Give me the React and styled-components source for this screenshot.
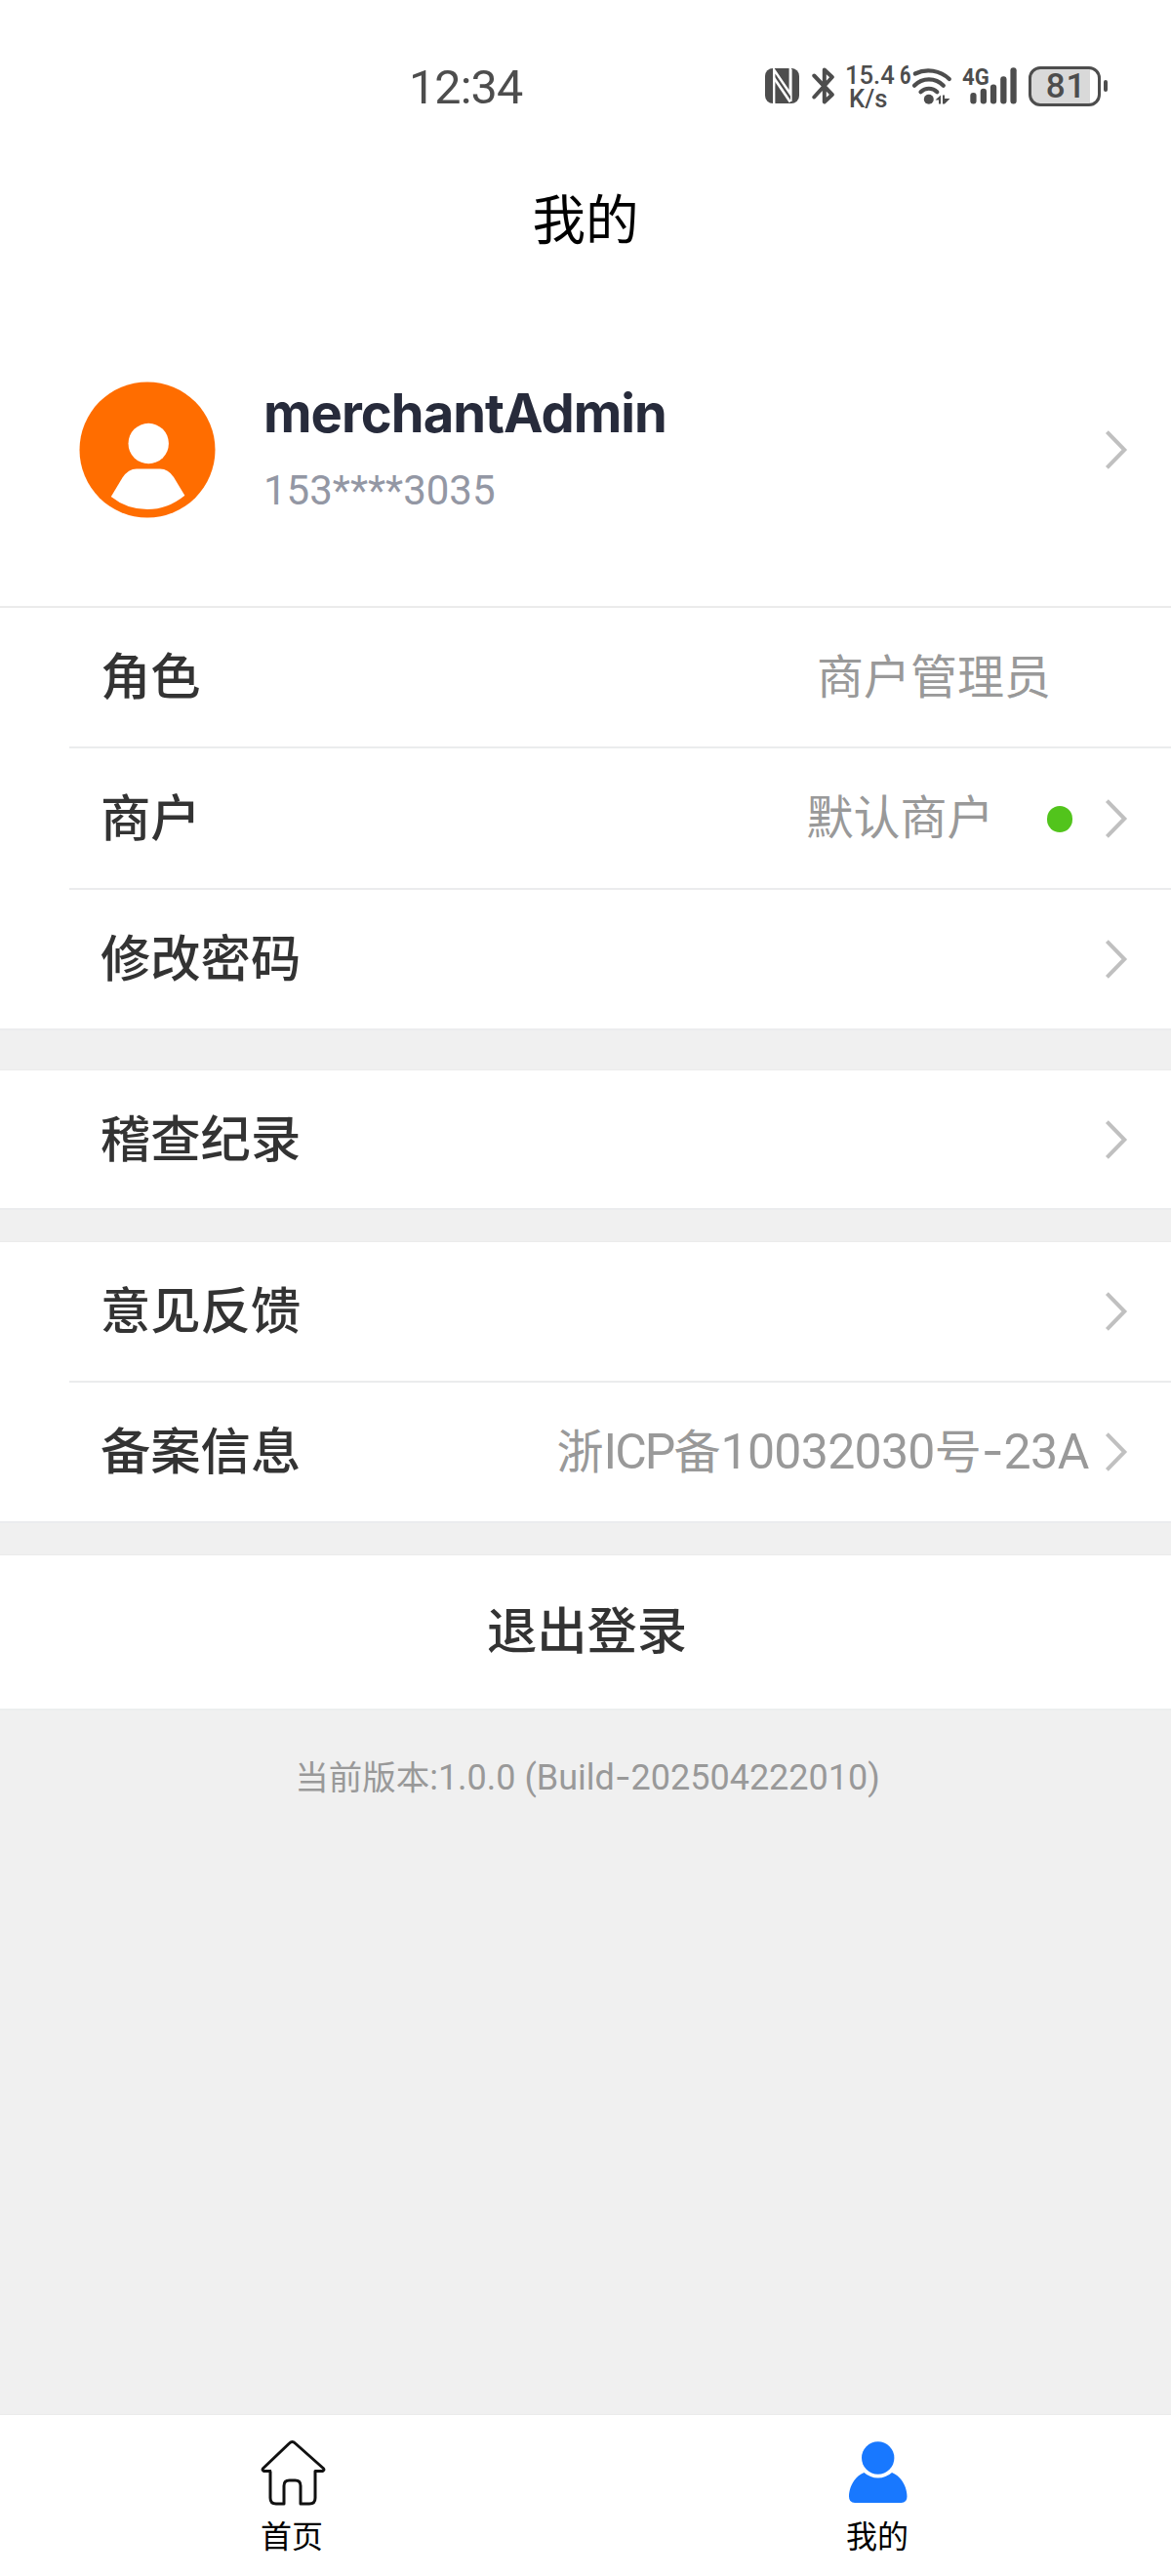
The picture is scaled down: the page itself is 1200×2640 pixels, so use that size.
import React from "react";
import styled, { createGlobalStyle } from "styled-components";

const GlobalStyle = createGlobalStyle`
  * { box-sizing: border-box; }
  body {
    margin: 0;
    background: #f0f0f0;
    font-family: Inter, "Noto Sans CJK SC", sans-serif;
  }
`;

const INK = "#4d4d4d";

const Screen = styled.div`
  width: 1200px;
  height: 2640px;
  display: flex;
  flex-direction: column;
  background: #f0f0f0;
  white-space: nowrap;
  overflow: hidden;
`;

const StatusBar = styled.div`
  height: 176px;
  flex: none;
  display: flex;
  align-items: center;
  background: #fff;
  color: ${INK};
  padding: 0 65px 0 419px;
  font-family: Roboto, sans-serif;
`;

const Clock = styled.div`
  flex: 1;
  font-size: 48.5px;
  line-height: 60px;
  font-weight: 400;
  letter-spacing: -0.9px;
  padding-top: 4px;
`;

const StatusIcons = styled.div`
  display: flex;
  align-items: center;

  svg { display: block; }
`;

const Gap = styled.span`
  width: ${(p) => p.$w}px;
`;

const Speed = styled.div`
  width: 51px;
  font-size: 25.6px;
  font-weight: 500;
  line-height: 23.5px;
  padding-top: 3px;
`;

const SpeedUnit = styled.div`
  padding-left: 4px;
`;

const WifiGeneration = styled.span`
  width: 12px;
  font-size: 25px;
  line-height: 26px;
  font-weight: 700;
  padding-bottom: 21px;
  transform: scaleX(0.8);
  transform-origin: left;
`;

const Cellular = styled.div`
  position: relative;
  width: 56px;
  height: 38px;
`;

const Network = styled.span`
  position: absolute;
  left: 0;
  top: -3px;
  font-size: 24.5px;
  line-height: 25px;
  font-weight: 700;
  transform: scaleX(0.9);
  transform-origin: left;
`;

const Battery = styled.div`
  width: 74px;
  height: 41px;
  border: 3px solid ${INK};
  border-radius: 12px;
  display: flex;
  align-items: center;
  justify-content: center;
  font-size: 35px;
  line-height: 35px;
  font-weight: 500;
  letter-spacing: 0.8px;
  padding: 1px 0 0 3px;
  background: linear-gradient(to right, #d9d9d9 60px, #fff 60px);
`;

const BatteryTip = styled.div`
  width: 4px;
  height: 12px;
  margin-left: 3px;
  border-radius: 2px;
  background: ${INK};
`;

const NavBar = styled.header`
  height: 94px;
  flex: none;
  display: flex;
  align-items: center;
  justify-content: center;
  background: #fff;
  color: #000;
  font-size: 54.6px;
  line-height: 60px;
  padding-top: 3px;
`;

const Profile = styled.section`
  height: 353px;
  flex: none;
  display: flex;
  align-items: center;
  background: #fff;
  border-bottom: 2px solid #ebebeb;
  padding: 30px 44px 0 81px;

  svg { display: block; }
`;

const Identity = styled.div`
  flex: 1;
  display: flex;
  flex-direction: column;
  padding: 4px 0 0 49px;
  line-height: 80px;
`;

const UserName = styled.div`
  font-size: 54.3px;
  font-weight: 700;
  letter-spacing: -0.95px;
  color: #272b3b;
`;

const Phone = styled.div`
  font-family: Roboto, sans-serif;
  font-size: 42px;
  color: #9397a4;
`;

const Group = styled.section`
  flex: none;
  background: #fff;
  margin-top: ${(p) => p.$gap || 0}px;
  border-top: ${(p) => (p.$gap ? "1px solid #ebebeb" : "none")};
  border-bottom: 2px solid #ebecee;
`;

const Row = styled.div`
  height: ${(p) => p.$h || 142}px;
  display: flex;
  align-items: center;
  padding: 0 44px 0 103px;
  line-height: 70px;
`;

const Divider = styled.div`
  height: 2px;
  margin-left: 71px;
  background: #ebeced;
`;

const Label = styled.div`
  flex: 1;
  font-size: 51.3px;
  font-weight: 500;
  color: #333;
  padding-bottom: 2px;
`;

const Value = styled.div`
  font-size: 48px;
  color: #999;
  padding-bottom: 1px;
  margin-right: ${(p) => p.$after}px;
`;

const Latin = styled.span`
  font-family: Roboto, sans-serif;
  font-size: ${(p) => p.$size}px;
  letter-spacing: ${(p) => p.$track || 0}px;
`;

const Dash = styled.span`
  font-family: Inter, sans-serif;
`;

const OnlineDot = styled.span`
  width: 26.5px;
  height: 26.5px;
  border-radius: 50%;
  background: #52c41c;
  margin: 2px 33px 0 0;
`;

const LogoutButton = styled.button`
  height: 158px;
  flex: none;
  margin-top: 32px;
  border: 0;
  border-top: 1px solid #ebebeb;
  background: #fff;
  color: #333;
  font-family: inherit;
  font-size: 51.3px;
  font-weight: 500;
  line-height: 70px;
  padding: 0 0 4px 3px;
`;

const Version = styled.footer`
  flex: 1;
  border-top: 2px solid #eceeee;
  padding: 38px 0 0 4px;
  text-align: center;
  color: #999;
  font-size: 34.5px;
  line-height: 60px;
`;

const TabBar = styled.nav`
  height: 166px;
  flex: none;
  display: flex;
  background: #fff;
  border-top: 1px solid #ebebeb;
`;

const Tab = styled.div`
  flex: 1;
  display: flex;
  flex-direction: column;
  align-items: center;
  padding-top: 22px;
  color: #000;
  font-size: 32px;
  line-height: 40px;

  svg { display: block; margin-bottom: 11px; }
`;

const TabLabel = styled.span`
  padding-right: 2px;
`;

const Chevron = () => (
  <svg width="24" height="42" viewBox="0 0 24 42" fill="none" stroke="#c0c0c0" strokeWidth="4">
    <path d="M2.4 2.7L20.3 21L2.4 39.3" />
  </svg>
);

const NfcIcon = () => (
  <svg width="35" height="36" viewBox="0 0 35 36">
    <rect width="35" height="36" rx="8" fill={INK} />
    <path d="M9.2 36V1.5L25.8 26V0" fill="none" stroke="#fff" strokeWidth="2.4" />
    <path d="M9.2 10L25.8 34.5" fill="none" stroke="#fff" strokeWidth="2.6" />
    <path d="M11.6 18V35" fill="none" stroke={INK} strokeWidth="1.4" />
    <path d="M26.8 1V34" fill="none" stroke="#fff" strokeWidth="1.6" />
  </svg>
);

const BluetoothIcon = () => (
  <svg width="24" height="38" viewBox="0 0 24 38" fill="none" stroke={INK} strokeWidth="4" strokeLinecap="round" strokeLinejoin="round">
    <path d="M2.3 8.5L20.8 28L12.8 35.5V2.5L20.8 10L2.3 30.5" />
  </svg>
);

const WifiIcon = () => (
  <svg width="42" height="40" viewBox="0 0 42 40">
    <g fill="none" stroke={INK} strokeWidth="4.2" strokeLinecap="round">
      <path d="M3.8 7.5A31 31 0 0 1 38.8 13" />
      <path d="M3 19.8A20.5 20.5 0 0 1 32.8 19.8" />
      <path d="M9.5 26.2A12 12 0 0 1 26.3 26.2" />
    </g>
    <circle cx="17.8" cy="33.8" r="5" fill={INK} />
    <path d="M24.5 34.5L30 29.5V38.5H28V34.5ZM32 29.5H34V33H39.5L34 38.5H32Z" fill={INK} />
  </svg>
);

const SignalBars = () => (
  <svg width="56" height="38" viewBox="0 0 56 38" fill={INK}>
    <rect x="8.3" y="26" width="6.3" height="11.5" rx="3" />
    <rect x="18.7" y="21.8" width="6.3" height="15.7" rx="3" />
    <rect x="28.9" y="17.5" width="6.3" height="20" rx="3" />
    <rect x="39.2" y="9.2" width="6.3" height="28.3" rx="3" />
    <rect x="49.4" y="0.3" width="6.3" height="37.2" rx="3" />
  </svg>
);

const Avatar = () => (
  <svg width="140" height="140" viewBox="0 0 140 140">
    <circle cx="70" cy="70" r="69.5" fill="#ff6d00" />
    <circle cx="71.2" cy="63.5" r="20.7" fill="#fff" />
    <path d="M32.8 118L44.5 98.5Q50.5 89.5 59 89.5H83Q91.5 89.5 97 98L108.3 116.8Q91 131 70 131Q49 131 32.8 118Z" fill="#fff" />
  </svg>
);

const HomeIcon = () => (
  <svg width="72" height="72" viewBox="0 0 72 72" fill="none" stroke="#111" strokeWidth="3" strokeLinejoin="round">
    <path d="M14 35.5H6.5Q4 34.5 5.8 32.5L32.5 7Q35.5 4 38.5 7L67.2 32.5Q69 34.5 66.5 35.5H59V63Q59 69 53 69H44V50.5Q44 45 38.5 45H32.5Q27 45 27 50.5V69H19Q13 69 13 63V35.5" />
  </svg>
);

const UserIcon = () => (
  <svg width="72" height="72" viewBox="0 0 72 72" fill="#1878ff">
    <circle cx="35.7" cy="22" r="16.7" />
    <path d="M21.5 37A21.3 21.3 0 0 0 50 37C60 41 65.500 52 65.500 61.500Q65.500 68 59.500 68H12Q6 68 6 61.500C6 52 11.500 41 21.500 37Z" />
  </svg>
);

export default function App() {
  return (
    <Screen>
      <GlobalStyle />
      <StatusBar>
        <Clock>12:34</Clock>
        <StatusIcons>
          <NfcIcon />
          <Gap $w={13} />
          <BluetoothIcon />
          <Gap $w={10} />
          <Speed>
            15.4
            <SpeedUnit>K/s</SpeedUnit>
          </Speed>
          <Gap $w={5} />
          <WifiGeneration>6</WifiGeneration>
          <WifiIcon />
          <Gap $w={10} />
          <Cellular>
            <SignalBars />
            <Network>4G</Network>
          </Cellular>
          <Gap $w={12} />
          <Battery>81</Battery>
          <BatteryTip />
        </StatusIcons>
      </StatusBar>
      <NavBar>我的</NavBar>

      <Profile>
        <Avatar />
        <Identity>
          <UserName>merchantAdmin</UserName>
          <Phone>153****3035</Phone>
        </Identity>
        <Chevron />
      </Profile>

      <Group>
        <Row>
          <Label>角色</Label>
          <Value $after={79}>商户管理员</Value>
        </Row>
        <Divider />
        <Row $h={143}>
          <Label>商户</Label>
          <Value $after={54}>默认商户</Value>
          <OnlineDot />
          <Chevron />
        </Row>
        <Divider />
        <Row>
          <Label>修改密码</Label>
          <Chevron />
        </Row>
      </Group>

      <Group $gap={40}>
        <Row $h={141}>
          <Label>稽查纪录</Label>
          <Chevron />
        </Row>
      </Group>

      <Group $gap={32}>
        <Row>
          <Label>意见反馈</Label>
          <Chevron />
        </Row>
        <Divider />
        <Row>
          <Label>备案信息</Label>
          <Value $after={16}>
            浙<Latin $size={50} $track={-1.9}>ICP</Latin>备
            <Latin $size={50} $track={-0.7}>10032030</Latin>号
            <Latin $size={50} $track={-0.4}><Dash>-</Dash>23A</Latin>
          </Value>
          <Chevron />
        </Row>
      </Group>

      <LogoutButton>退出登录</LogoutButton>
      <Version>
        当前版本<Latin $size={36}>:1.0.0 (Build<Dash>-</Dash>202504222010)</Latin>
      </Version>

      <TabBar>
        <Tab>
          <HomeIcon />
          <TabLabel>首页</TabLabel>
        </Tab>
        <Tab>
          <UserIcon />
          <TabLabel>我的</TabLabel>
        </Tab>
      </TabBar>
    </Screen>
  );
}
